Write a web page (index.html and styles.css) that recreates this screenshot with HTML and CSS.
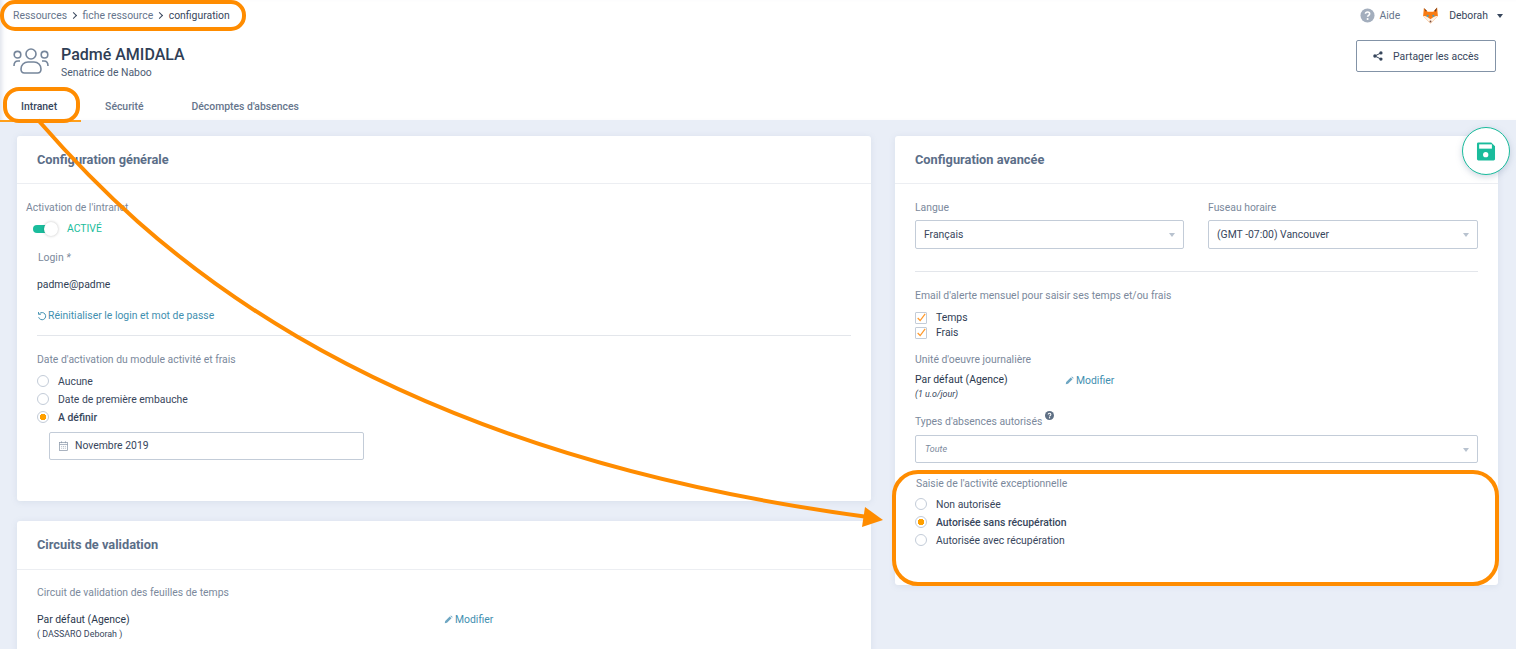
FILE: index.html
```html
<!DOCTYPE html>
<html lang="fr">

<head>
    <meta charset="UTF-8">
    <title>Configuration ressource</title>
    <link rel="stylesheet" href="styles.css">
</head>

<body>
    <div id="page">
        <header class="top">
            <div class="top-bar">
                <div class="breadcrumb">
                    <span>Ressources</span><i class="sep"></i><span>fiche ressource</span><i class="sep"></i><span class="current">configuration</span>
                </div>
                <div class="user-zone">
                    <svg class="help-icon" viewBox="0 0 16 16"><circle cx="8" cy="8" r="7.5" fill="#a3aebd"/><path d="M5.8 6.2C5.900 4.900 6.900 4.200 8.100 4.200c1.300 0 2.200.8 2.200 1.900 0 1.700-2.200 1.700-2.200 3.300" fill="none" stroke="#fff" stroke-width="1.700"/><circle cx="8.100" cy="11.700" r="1.100" fill="#fff"/></svg>
                    <span class="help-text">Aide</span>
                    <svg class="fox" viewBox="0 0 18 18">
                        <path d="M2 1l4 4h6l4-4.500.8 9L9 17.500 1.200 9.500z" fill="#f97b12"/>
                        <path d="M2 1l2 3.800L5.200 4zM16 .5L13 4l1.800 1z" fill="#6b3a1e"/>
                        <path d="M1.200 9.500c3-.5 5 1 7.800 3.500 2.800-2.500 4.800-4 7.800-3.500L9 17.500z" fill="#fdf1e4"/>
                        <circle cx="6" cy="9.300" r="1.200" fill="#4a9fc0"/>
                        <circle cx="12" cy="9.300" r="1.200" fill="#4a9fc0"/>
                        <circle cx="9" cy="15.300" r="1" fill="#7a4a3a"/>
                    </svg>
                    <span class="user-name">Deborah</span>
                    <i class="caret-dark"></i>
                </div>
            </div>

            <div class="identity">
                <div class="person">
                    <svg class="people-icon" viewBox="0 0 36 28" fill="none" stroke="#76869b" stroke-width="1.600">
                        <circle cx="18" cy="8" r="5"/>
                        <circle cx="4.500" cy="8.700" r="3.300"/>
                        <circle cx="31.500" cy="8.700" r="3.300"/>
                        <path d="M8 23c0-4 3-7 7-7h6c4 0 7 3 7 7 0 2.500-1.500 4-3.500 4h-13C9.500 27 8 25.500 8 23z"/>
                        <path d="M1 20c0-3 1.500-5 4-5h2"/>
                        <path d="M35 20c0-3-1.500-5-4-5h-2"/>
                    </svg>
                    <div>
                        <h1>Padmé AMIDALA</h1>
                        <p class="role">Senatrice de Naboo</p>
                    </div>
                </div>
                <button class="share-btn">
                    <svg viewBox="0 0 12 12"><circle cx="9.500" cy="2.300" r="2" fill="#37465c"/><circle cx="9.500" cy="9.700" r="2" fill="#37465c"/><circle cx="2.300" cy="6" r="2" fill="#37465c"/><path d="M9.500 2.300L2.300 6l7.200 3.700" fill="none" stroke="#37465c" stroke-width="1.200"/></svg>
                    Partager les accès
                </button>
            </div>

            <nav class="tabs">
                <a class="tab active">Intranet</a>
                <a class="tab">Sécurité</a>
                <a class="tab">Décomptes d'absences</a>
            </nav>
        </header>

        <main class="columns">
            <div class="col-left">
                <section class="card card-general">
                    <h2 class="card-title">Configuration générale</h2>
                    <div class="card-body">
                        <div class="label label-activation">Activation de l'intranet</div>
                        <div class="switch-row">
                            <span class="switch"><i></i></span>
                            <span class="switch-text">ACTIVÉ</span>
                        </div>
                        <div class="label label-login">Login <em>*</em></div>
                        <div class="login-value">padme@padme</div>
                        <a class="link reset-link">
                            <svg viewBox="0 0 12 12" fill="none" stroke="#3f8fb0" stroke-width="1.200"><path d="M3 3.200A4.300 4.300 0 1 1 2 7.500"/><path d="M1.800 1.200v2.800h2.800" stroke-width="1.100"/></svg>
                            Réinitialiser le login et mot de passe
                        </a>
                        <hr class="sep-line">
                        <div class="label label-date">Date d'activation du module activité et frais</div>
                        <div class="radio-list">
                            <div class="radio-row"><i class="radio"></i>Aucune</div>
                            <div class="radio-row"><i class="radio"></i>Date de première embauche</div>
                            <div class="radio-row selected"><i class="radio checked"></i>A définir</div>
                        </div>
                        <div class="date-input">
                            <svg viewBox="0 0 10 11" fill="none" stroke="#8a97a8" stroke-width=".8"><rect x=".5" y="1.500" width="9" height="9"/><path d="M.5 3.800h9M2.800.3v2M7.200.3v2M2.500 6h1M4.500 6h1M6.500 6h1M2.500 8h1M4.500 8h1M6.500 8h1"/></svg>
                            Novembre 2019
                        </div>
                    </div>
                </section>

                <section class="card card-circuits">
                    <h2 class="card-title">Circuits de validation</h2>
                    <div class="card-body">
                        <div class="label label-circuit">Circuit de validation des feuilles de temps</div>
                        <div class="circuit-row">
                            <div>
                                <div class="default-name">Par défaut (Agence)</div>
                                <div class="small-note">( DASSARO Deborah )</div>
                            </div>
                            <a class="link modify-link">
                                <svg viewBox="0 0 12 12"><path d="M1 11l.6-3 6-6 2.400 2.400-6 6zM8.400 1.200l.8-.7 2.300 2.300-.7.8z" fill="#6ea6c2"/></svg>
                                Modifier
                            </a>
                        </div>
                    </div>
                </section>
            </div>

            <section class="card card-advanced">
                <h2 class="card-title">Configuration avancée</h2>
                <div class="card-body">
                    <div class="select-grid">
                        <div>
                            <div class="label">Langue</div>
                            <div class="select">Français<i class="caret"></i></div>
                        </div>
                        <div>
                            <div class="label">Fuseau horaire</div>
                            <div class="select">(GMT -07:00) Vancouver<i class="caret"></i></div>
                        </div>
                    </div>
                    <hr class="sep-line sep-advanced">
                    <div class="label label-email">Email d'alerte mensuel pour saisir ses temps et/ou frais</div>
                    <div class="check-row">
                        <span class="check"><svg viewBox="0 0 12 12"><path d="M2 6l3 3 6-8" fill="none" stroke="#ff9a2e" stroke-width="1.500"/></svg></span>Temps
                    </div>
                    <div class="check-row">
                        <span class="check"><svg viewBox="0 0 12 12"><path d="M2 6l3 3 6-8" fill="none" stroke="#ff9a2e" stroke-width="1.500"/></svg></span>Frais
                    </div>
                    <div class="label label-unit">Unité d'oeuvre journalière</div>
                    <div class="unit-row">
                        <div class="unit-info">
                            <div class="default-name">Par défaut (Agence)</div>
                            <div class="small-note note-italic">(1 u.o/jour)</div>
                        </div>
                        <a class="link modify-link">
                            <svg viewBox="0 0 12 12"><path d="M1 11l.6-3 6-6 2.400 2.400-6 6zM8.400 1.200l.8-.7 2.300 2.300-.7.8z" fill="#6ea6c2"/></svg>
                            Modifier
                        </a>
                    </div>
                    <div class="label label-types">Types d'absences autorisés<svg class="mini-help" viewBox="0 0 16 16"><circle cx="8" cy="8" r="8" fill="#5f7085"/><path d="M5.500 6.200C5.600 4.700 6.700 4 8 4c1.500 0 2.500.9 2.500 2.100 0 1.900-2.400 1.800-2.400 3.600" fill="none" stroke="#fff" stroke-width="1.800"/><circle cx="8.100" cy="12" r="1.200" fill="#fff"/></svg></div>
                    <div class="select select-wide">Toute<i class="caret"></i></div>
                    <div class="label label-saisie">Saisie de l'activité exceptionnelle</div>
                    <div class="radio-list">
                        <div class="radio-row"><i class="radio"></i>Non autorisée</div>
                        <div class="radio-row selected"><i class="radio checked"></i>Autorisée sans récupération</div>
                        <div class="radio-row"><i class="radio"></i>Autorisée avec récupération</div>
                    </div>
                </div>
            </section>
        </main>

        <button class="save-btn">
            <svg viewBox="0 0 20 20"><path d="M2 .5h13.500L19.500 4.500V18a1.500 1.500 0 0 1-1.500 1.500H2A1.500 1.500 0 0 1 .5 18V2A1.500 1.500 0 0 1 2 .5z" fill="#1abc9c"/><rect x="2.800" y="2.500" width="13.400" height="4.500" fill="#fff"/><circle cx="9.700" cy="13.300" r="2.800" fill="#fff"/></svg>
        </button>

        <!-- orange annotations drawn over the screen -->
        <svg class="annotations" viewBox="0 0 1516 649" fill="none" stroke="#ff8c00" stroke-width="4">
            <rect x="2" y="2" width="242" height="27" rx="13"/>
            <rect x="5" y="89" width="73" height="32" rx="14"/>
            <rect x="894" y="472" width="603" height="112" rx="24"/>
            <path d="M38 120C140 237 350 448 868 517"/>
            <path d="M883 520L865 507L862 527Z" fill="#ff8c00" stroke="none"/>
        </svg>
    </div>
</body>

</html>
```

FILE: styles.css
```css
html,
body {
    margin: 0;
    height: 100%;
    overflow: hidden;
}

body {
    font-family: Roboto, "Liberation Sans", sans-serif;
    font-size: 10.4px;
    color: #37465c;
}

#page {
    position: relative;
    height: 649px;
    background: #e9eef7;
    overflow: hidden;
}

/* header */
.top {
    background: white;
    height: 120px;
    box-sizing: border-box;
    box-shadow: inset 5px 0 4px -3px rgba(150, 160, 185, 0.3);
}

.top-bar {
    display: flex;
    justify-content: space-between;
    align-items: center;
    height: 31px;
    padding: 0 13px;
}

.breadcrumb {
    display: flex;
    align-items: center;
    color: #66758c;
}

.breadcrumb .current {
    color: #37465c;
}

.sep {
    width: 4px;
    height: 4px;
    border-top: 1px solid #37465c;
    border-right: 1px solid #37465c;
    transform: rotate(45deg);
    margin: 0 6.500px 0 4px;
}

.user-zone {
    display: flex;
    align-items: center;
}

.help-icon {
    width: 15px;
    height: 15px;
    margin: 0 5px 0 1px;
}

.help-text {
    color: #66758c;
    margin-right: 22px;
}

.fox {
    width: 17px;
    height: 17px;
    margin-right: 10px;
}

.caret-dark {
    border: 3.500px solid transparent;
    border-top: 4px solid #37465c;
    border-bottom: 0;
    margin-left: 9px;
}

.identity {
    display: flex;
    justify-content: space-between;
    padding: 9px 20px 0 13px;
    height: 52px;
    box-sizing: border-box;
}

.person {
    display: flex;
    align-items: flex-start;
    gap: 12px;
}

.people-icon {
    width: 36px;
    height: 28px;
    margin-top: 6px;
}

h1 {
    margin: 5px 0 0;
    font-size: 16px;
    line-height: 20px;
    font-weight: 500;
    color: #2f3e55;
}

.role {
    margin: 1px 0 0;
    line-height: 13px;
    color: #4d5c73;
}

.share-btn {
    display: flex;
    align-items: center;
    justify-content: center;
    gap: 10px;
    width: 140px;
    height: 32px;
    background: white;
    border: 1px solid #8393a7;
    border-radius: 2px;
    font: inherit;
    color: #37465c;
}

.share-btn svg {
    width: 10px;
    height: 10px;
}

.tabs {
    display: flex;
    height: 37px;
}

.tab {
    height: 28px;
    line-height: 30px;
    margin-top: 9px;
    padding: 0 24px;
    color: #66758c;
    font-weight: 500;
}

.tab.active {
    padding: 0 24px 0 21px;
    color: #37465c;
    border-bottom: 2px solid #ff9f1a;
}

/* columns and cards */
.columns {
    display: flex;
    align-items: flex-start;
    padding: 16px 18px 0 17px;
    gap: 24px;
}

.col-left {
    width: 854px;
    flex: none;
}

.card {
    background: white;
    border-radius: 3px;
    box-shadow: 0 1px 6px rgba(120, 140, 170, 0.15);
}

.card-title {
    margin: 0;
    height: 48px;
    box-sizing: border-box;
    padding: 0 20px;
    line-height: 47px;
    font-size: 12.800px;
    font-weight: 700;
    color: #5b6e88;
    border-bottom: 1px solid #eceef2;
}

.card-general {
    height: 365px;
}

.card-general .card-body {
    padding: 16px 20px 0;
}

.card-circuits {
    margin-top: 20px;
    height: 200px;
}

.card-circuits .card-title {
    height: 49px;
}

.card-circuits .card-body {
    padding: 16px 20px 0;
}

.card-advanced {
    flex: 1;
    height: 449px;
}

.card-advanced .card-body {
    padding: 16px 20px 0;
}

.label {
    line-height: 15px;
    color: #7b899c;
}

.label-activation {
    margin-left: -11px;
}

.switch-row {
    display: flex;
    align-items: center;
    margin: 6px 0 0 -4px;
    height: 15px;
}

.switch {
    position: relative;
    display: block;
    width: 21px;
    height: 8px;
    border-radius: 4px;
    background: #1abc9c;
}

.switch i {
    position: absolute;
    left: 11px;
    top: -3px;
    width: 14px;
    height: 14px;
    border-radius: 50%;
    background: white;
    box-shadow: 0 0 3px rgba(0, 0, 0, 0.25);
}

.switch-text {
    margin-left: 13px;
    color: #1abc9c;
}

.label-login {
    margin: 14px 0 0 1px;
}

.login-value {
    margin: 12px 0 0;
    line-height: 15px;
    color: #2f3e55;
}

.link {
    color: #3f8fb0;
    display: flex;
    align-items: center;
}

.reset-link {
    margin-top: 16px;
    line-height: 15px;
    gap: 1px;
}

.reset-link svg {
    width: 10px;
    height: 10px;
}

.sep-line {
    border: 0;
    border-top: 1px solid #e3e6eb;
    margin: 12px 0 0;
}

.label-date {
    margin-top: 16px;
}

.radio-list {
    margin-top: 5px;
}

.radio-row {
    display: flex;
    align-items: center;
    height: 18px;
    color: #37465c;
}

.radio-row.selected {
    font-weight: 500;
}

.radio {
    box-sizing: border-box;
    width: 12px;
    height: 12px;
    border: 1px solid #c3ccd8;
    border-radius: 50%;
    margin-right: 9px;
    background: white;
}

.radio.checked {
    background: radial-gradient(circle, #ffa000 0, #ffa000 3px, white 3.500px);
}

.date-input {
    display: flex;
    align-items: center;
    gap: 7px;
    box-sizing: border-box;
    width: 315px;
    height: 28px;
    margin: 6px 0 0 12px;
    padding: 0 0 1px 9px;
    border: 1px solid #c3ccd8;
    border-radius: 2px;
}

.date-input svg {
    width: 9px;
    height: 10px;
}

.label-circuit {
    margin-top: -1px;
}

.circuit-row {
    display: flex;
    margin-top: 12px;
}

.circuit-row > div:first-child {
    width: 407px;
}

.default-name {
    line-height: 15px;
    color: #2a384d;
}

.small-note {
    margin-top: 1px;
    font-size: 8.900px;
    line-height: 13px;
    color: #37465c;
}

.note-italic {
    font-style: italic;
}

.modify-link {
    align-self: flex-start;
    gap: 2px;
    line-height: 15px;
}

.unit-row .modify-link {
    margin-top: 1px;
}

.modify-link svg {
    width: 9px;
    height: 9px;
}

.select-grid {
    display: grid;
    grid-template-columns: 269px 270px;
    gap: 24px;
}

.select {
    position: relative;
    box-sizing: border-box;
    height: 29px;
    margin-top: 5px;
    padding-left: 8px;
    line-height: 27px;
    border: 1px solid #c3ccd8;
    border-radius: 2px;
}

.caret {
    position: absolute;
    right: 8px;
    top: 12px;
    border: 3px solid transparent;
    border-top: 4px solid #b8c2cf;
    border-bottom: 0;
}

.sep-advanced {
    margin-top: 22px;
}

.label-email {
    margin-top: 16px;
}

.check-row {
    display: flex;
    align-items: center;
    height: 15px;
    color: #2f3e55;
}

.label-email + .check-row {
    margin-top: 7px;
}

.check {
    box-sizing: border-box;
    width: 12px;
    height: 12px;
    border: 1px solid #c3ccd8;
    border-radius: 1px;
    margin-right: 9px;
}

.check svg {
    display: block;
    width: 10px;
    height: 10px;
    overflow: visible;
}

.label-unit {
    margin-top: 12px;
}

.unit-row {
    display: flex;
    margin-top: 5px;
}

.unit-info {
    width: 150px;
}

.label-types {
    margin-top: 13px;
}

.mini-help {
    width: 9px;
    height: 9px;
    margin: -8px 0 0 3px;
    vertical-align: 5px;
}

.select-wide {
    height: 28px;
    margin-top: 6px;
    padding-left: 9px;
    font-size: 9px;
    font-style: italic;
    color: #7b899c;
}

.label-saisie {
    margin: 13px 0 0 1px;
}

.card-advanced .radio-list {
    margin-top: 4px;
}

/* floating save button */
.save-btn {
    position: absolute;
    left: 1462px;
    top: 127px;
    width: 48px;
    height: 48px;
    padding: 0;
    border: 1px solid #1abc9c;
    border-radius: 50%;
    background: white;
    box-shadow: 0 2px 6px rgba(120, 140, 170, 0.35);
}

.save-btn svg {
    display: block;
    width: 20px;
    height: 19px;
    margin: auto;
}

.annotations {
    position: absolute;
    left: 0;
    top: 0;
    width: 1516px;
    height: 649px;
    pointer-events: none;
}
```
